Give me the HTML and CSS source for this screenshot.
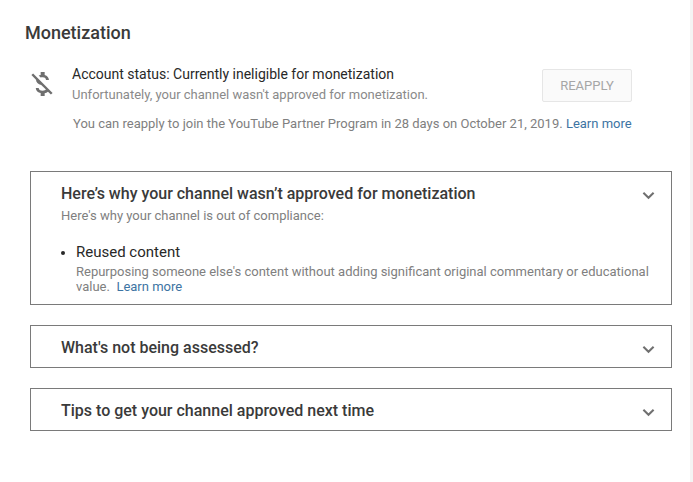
FILE: index.html
```html
<!DOCTYPE html>
<html lang="en">
<head>
    <meta charset="UTF-8">
    <meta name="viewport" content="width=device-width, initial-scale=1.0">
    <title>Monetization</title>
    <link rel="stylesheet" href="styles.css">
</head>
<body>
    <main class="content">
        <h1 class="page-title">Monetization</h1>

        <section class="status">
            <svg class="status-icon" viewBox="0 0 24 24" aria-hidden="true">
                <path d="M12.5 6.9c1.78 0 2.44.85 2.5 2.1h2.21c-.07-1.72-1.12-3.3-3.21-3.81V3h-3v2.16c-.53.12-1.03.3-1.48.54l1.47 1.47c.41-.17.91-.27 1.51-.27zM5.33 4.06L4.06 5.33 7.5 8.77c0 2.08 1.56 3.22 3.91 3.91l3.51 3.51c-.34.49-1.05.91-2.42.91-2.06 0-2.87-.92-2.98-2.1h-2.2c.12 2.19 1.76 3.42 3.68 3.83V21h3v-2.15c.96-.18 1.83-.55 2.46-1.12l2.22 2.22 1.27-1.27L5.33 4.06z"/>
            </svg>
            <div class="status-text">
                <div class="status-title">Account status: Currently ineligible for monetization</div>
                <div class="status-sub">Unfortunately, your channel wasn't approved for monetization.</div>
            </div>
            <button class="reapply" type="button" disabled>REAPPLY</button>
        </section>
        <p class="reapply-note">You can reapply to join the YouTube Partner Program in 28 days on October 21, 2019. <a href="#">Learn more</a></p>

        <section class="panel">
            <div class="panel-head">
                <h2>Here’s why your channel wasn’t approved for monetization</h2>
                <svg class="chevron" viewBox="0 0 14 9" aria-hidden="true"><path d="M1.5 1.5 7 7l5.5-5.5"/></svg>
            </div>
            <p class="panel-intro">Here's why your channel is out of compliance:</p>
            <ul class="reasons">
                <li>
                    <div class="reason-title">Reused content</div>
                    <div class="reason-text">Repurposing someone else's content without adding significant original commentary or educational value.&nbsp; <a href="#">Learn more</a></div>
                </li>
            </ul>
        </section>

        <section class="panel panel-closed">
            <div class="panel-head">
                <h2>What's not being assessed?</h2>
                <svg class="chevron" viewBox="0 0 14 9" aria-hidden="true"><path d="M1.5 1.5 7 7l5.5-5.5"/></svg>
            </div>
        </section>

        <section class="panel panel-closed">
            <div class="panel-head">
                <h2>Tips to get your channel approved next time</h2>
                <svg class="chevron" viewBox="0 0 14 9" aria-hidden="true"><path d="M1.5 1.5 7 7l5.5-5.5"/></svg>
            </div>
        </section>
    </main>
    <div class="scroll-strip"></div>
</body>
</html>
```

FILE: styles.css
```css
html, body {
    height: 100%;
}

body {
    margin: 0;
    display: flex;
    background-color: white;
    font-family: Roboto, "Liberation Sans", sans-serif;
    color: #282828;
    overflow: hidden;
}

.content {
    flex: 1;
    min-width: 0;
    padding: 22px 18px 0 30px;
}

.scroll-strip {
    width: 3px;
    background-color: #f4f4f4;
}

a {
    color: #3d74a3;
    text-decoration: none;
}

.page-title {
    margin: 0 0 0 -5px;
    font-size: 18px;
    line-height: 22px;
    font-weight: 500;
    color: #3a3a3a;
}

.status {
    display: flex;
    align-items: flex-start;
    margin-top: 20px;
}

.status-icon {
    width: 32px;
    height: 32px;
    margin: 4px 0 0 -4px;
    fill: #6f6f6f;
    flex: none;
}

.status-text {
    flex: 1;
    margin-left: 14px;
}

.status-title {
    font-size: 14px;
    line-height: 20px;
}

.status-sub {
    margin-top: 1px;
    font-size: 13px;
    line-height: 20px;
    color: #8a8a8a;
}

.reapply {
    width: 90px;
    height: 33px;
    margin: 5px 40px 0 0;
    padding: 0;
    border: 1px solid #e6e6e6;
    border-radius: 2px;
    background-color: #fafafa;
    color: #a6a6a6;
    font-family: inherit;
    font-size: 13px;
}

.reapply-note {
    margin: 9px 0 0 43px;
    font-size: 13px;
    line-height: 20px;
    color: #808080;
    white-space: nowrap;
}

.panel {
    border: 1px solid #7a7a7a;
    margin-top: 37px;
    padding: 11px 20px 10px 30px;
}

.panel-closed {
    margin-top: 20px;
    padding-bottom: 9px;
}

.panel-head {
    display: flex;
    align-items: center;
    justify-content: space-between;
}

.panel-head h2 {
    margin: 0;
    font-size: 16px;
    line-height: 21px;
    font-weight: 500;
    color: #3a3a3a;
}

.chevron {
    width: 13px;
    height: 9px;
    margin: 3px -4px 0 0;
    fill: none;
    stroke: #707070;
    stroke-width: 2.2;
    flex: none;
}

.panel-intro {
    margin: 3px 0 0;
    font-size: 13px;
    line-height: 18px;
    color: #808080;
}

.reasons {
    margin: 17px 0 0;
    padding: 0 0 0 15px;
}

.reasons li::marker {
    font-size: 13px;
}

.reason-title {
    font-size: 15px;
    line-height: 20px;
}

.reason-text {
    font-size: 13px;
    line-height: 15px;
    margin-top: 2px;
    color: #808080;
}
```
